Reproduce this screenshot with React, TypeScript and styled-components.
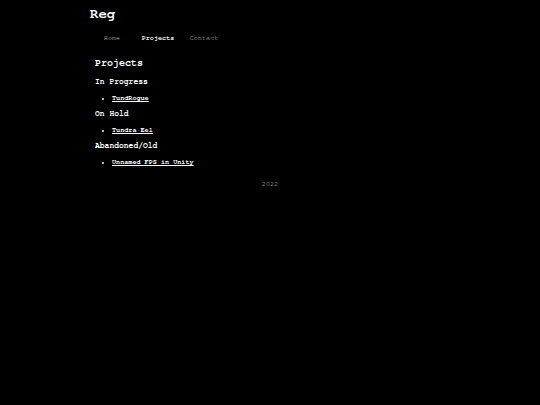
import React from 'react'
import styled, { createGlobalStyle } from 'styled-components'

const GlobalStyle = createGlobalStyle`
  body {
    margin: 0;
    background: #000;
    color: #eee;
    font-family: "FreeMono", "Liberation Mono", "Courier New", monospace;
  }
`

const Page = styled.div`
  width: 360px;
  margin: 0 auto;
`

const Logo = styled.h1`
  margin: 0;
  padding-top: 7px;
  font-size: 14px;
  line-height: 14px;
  font-weight: bold;
  color: #fff;
`

const Nav = styled.nav`
  display: flex;
  margin: 12px 0 0 -1px;
`

const NavItem = styled.a<{ $active?: boolean }>`
  width: 46px;
  text-align: center;
  font-size: 6.8px;
  line-height: 10px;
  color: ${(p) => (p.$active ? '#eee' : '#c4c4c4')};
  font-weight: ${(p) => (p.$active ? 'bold' : 'normal')};
  text-decoration: none;
`

const Main = styled.main`
  padding-left: 5px;
  margin-top: 14px;
`

const Title = styled.h2`
  margin: 0 0 8px;
  font-size: 10px;
  line-height: 12px;
  font-weight: bold;
  color: #fff;
`

const Section = styled.h3`
  margin: 0;
  font-size: 8px;
  line-height: 10px;
  font-weight: bold;
  color: #fff;
`

const List = styled.ul`
  margin: 6px 0;
  padding-left: 17px;
  font-size: 6.8px;
  line-height: 10px;
`

const Item = styled.li`
  color: #eee;
`

const ProjectLink = styled.a`
  color: #fff;
  font-weight: bold;
  text-decoration: underline;
`

const Footer = styled.footer`
  margin-top: 12px;
  text-align: center;
  font-size: 6.8px;
  line-height: 10px;
  color: #c4c4c4;
`

const groups = [
  { name: 'In Progress', items: ['TundRogue'] },
  { name: 'On Hold', items: ['Tundra Eel'] },
  { name: 'Abandoned/Old', items: ['Unnamed FPS in Unity'] },
]

const App = () => {
  return (
    <>
      <GlobalStyle />
      <Page>
        <Logo>Reg</Logo>
        <Nav>
          <NavItem href='#'>Home</NavItem>
          <NavItem href='#' $active>
            Projects
          </NavItem>
          <NavItem href='#'>Contact</NavItem>
        </Nav>
        <Main>
          <Title>Projects</Title>
          {groups.map((g) => (
            <div key={g.name}>
              <Section>{g.name}</Section>
              <List>
                {g.items.map((it) => (
                  <Item key={it}>
                    <ProjectLink href='#'>{it}</ProjectLink>
                  </Item>
                ))}
              </List>
            </div>
          ))}
        </Main>
        <Footer>2022</Footer>
      </Page>
    </>
  )
}

export default App
